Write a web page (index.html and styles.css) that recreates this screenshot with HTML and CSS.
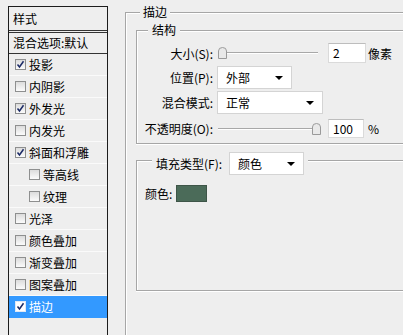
FILE: index.html
```html
<!DOCTYPE html>
<html>
<head>
<meta charset="utf-8">
<meta name="viewport" content="width=device-width, initial-scale=1.0"/>
<link rel="stylesheet" href="styles.css">
</head>
<body>
<div class="dialog">
  <!-- left list of layer styles -->
  <div class="style-list">
    <div class="list-head">样式</div>
    <div class="list-blend">混合选项:默认</div>
    <div class="item"><span class="cb"><svg width="9" height="9" viewBox="0 0 9 9"><path d="M1.5 4.5 L3.5 7 L7.5 1.2" fill="none" stroke="#1b2a66" stroke-width="1.5"/></svg></span>投影</div>
    <div class="item"><span class="cb"></span>内阴影</div>
    <div class="item"><span class="cb"><svg width="9" height="9" viewBox="0 0 9 9"><path d="M1.5 4.5 L3.5 7 L7.5 1.2" fill="none" stroke="#1b2a66" stroke-width="1.5"/></svg></span>外发光</div>
    <div class="item"><span class="cb"></span>内发光</div>
    <div class="item"><span class="cb"><svg width="9" height="9" viewBox="0 0 9 9"><path d="M1.5 4.5 L3.5 7 L7.5 1.2" fill="none" stroke="#1b2a66" stroke-width="1.5"/></svg></span>斜面和浮雕</div>
    <div class="item sub"><span class="cb"></span>等高线</div>
    <div class="item sub"><span class="cb"></span>纹理</div>
    <div class="item"><span class="cb"></span>光泽</div>
    <div class="item"><span class="cb"></span>颜色叠加</div>
    <div class="item"><span class="cb"></span>渐变叠加</div>
    <div class="item"><span class="cb"></span>图案叠加</div>
    <div class="item sel"><span class="cb"><svg width="9" height="9" viewBox="0 0 9 9"><path d="M1.5 4.5 L3.5 7 L7.5 1.2" fill="none" stroke="#1b2a66" stroke-width="1.5"/></svg></span>描边</div>
  </div>

  <!-- stroke settings -->
  <fieldset class="group outer">
    <legend class="title">描边</legend>
    <fieldset class="group struct">
      <legend class="title sub-title">结构</legend>
      <div class="row r1">
        <span class="lbl">大小(S):</span>
        <div class="slider"><span class="thumb" style="left:1px"><svg width="9" height="12" viewBox="0 0 9 12"><path d="M0.5 11.5 V4 Q0.5 0.5 4.5 0.5 Q8.5 0.5 8.5 4 V11.5 Z" fill="#e9e9e9" stroke="#9a9a9a"/></svg></span></div>
        <span class="num">2</span>
        <span class="unit">像素</span>
      </div>
      <div class="row r2">
        <span class="lbl">位置(P):</span>
        <div class="select w-pos">外部<span class="arrow"></span></div>
      </div>
      <div class="row r3">
        <span class="lbl">混合模式:</span>
        <div class="select w-mode">正常<span class="arrow"></span></div>
      </div>
      <div class="row r4">
        <span class="lbl">不透明度(O):</span>
        <div class="slider"><span class="thumb" style="left:95px"><svg width="9" height="12" viewBox="0 0 9 12"><path d="M0.5 11.5 V4 Q0.5 0.5 4.5 0.5 Q8.5 0.5 8.5 4 V11.5 Z" fill="#e9e9e9" stroke="#9a9a9a"/></svg></span></div>
        <span class="num short">100</span>
        <span class="unit pct">%</span>
      </div>
    </fieldset>

    <fieldset class="group fill">
      <legend class="fill-legend">
        <span>填充类型(F):</span>
        <span class="select w-fill">颜色<span class="arrow"></span></span>
      </legend>
      <div class="color-row">
        <span>颜色:</span>
        <span class="swatch"></span>
      </div>
    </fieldset>
  </fieldset>
</div>
</body>
</html>
```

FILE: styles.css
```css
body {
margin: 0;
background: #eeeeee;
font-family: "Noto Sans CJK SC", "Liberation Sans", sans-serif;
font-size: 12px;
color: #000;
overflow: hidden;
}
.dialog {
display: flex;
align-items: flex-start;
height: 335px;
overflow: hidden;
}
/* left list */
.style-list {
flex: none;
margin: 6px 0 0 8px;
width: 100px;
height: 329px;
box-sizing: border-box;
border: 1px solid #1c1c1c;
border-bottom: none;
background: #eeeeee;
}
.list-head {
height: 23px;
line-height: 23px;
padding-left: 4px;
border-bottom: 3px double #333;
}
.list-blend {
height: 20px;
line-height: 20px;
padding-left: 4px;
border-bottom: 1px solid #333;
}
.item {
height: 21px;
display: flex;
align-items: center;
padding-left: 6px;
border-bottom: 1px solid #fafafa;
}
.item.sub {
padding-left: 20px;
}
.item.sel {
background: #3399ff;
color: #fff;
border-bottom-color: #3399ff;
}
.cb {
flex: none;
width: 11px;
height: 11px;
box-sizing: border-box;
margin-right: 3px;
border: 1px solid #8e8f8f;
background: linear-gradient(#dcdcdc, #fbfbfb);
display: flex;
align-items: center;
justify-content: center;
}
.item.sel .cb {
background: #fff;
border-color: #dfe8f5;
}
/* group boxes */
fieldset {
margin: 0;
min-width: 0;
}
.group {
border: 1px solid #a6a6a6;
box-shadow: inset 1px 1px 0 #fff, 1px 1px 0 #fff;
}
.title {
padding: 0 3px;
margin-left: 4px;
line-height: 16px;
background: #eeeeee;
}
.outer {
flex: none;
margin: 4px 0 0 17px;
padding: 0 0 0 10px;
width: 278px;
height: 331px;
box-sizing: border-box;
border-right: none;
border-bottom: none;
box-shadow: inset 1px 1px 0 #fff;
}
.struct {
margin: 2px 0 0 0;
padding: 0 0 5px 6px;
border-right: none;
box-shadow: inset 1px 1px 0 #fff, 0 1px 0 #fff;
}
.sub-title {
margin-left: 5px;
padding: 0 4px;
}
.row {
display: flex;
align-items: center;
}
.r1 { margin-top: 5px; height: 20px; }
.r2 { margin-top: 3px; height: 23px; }
.r3 { margin-top: 2px; height: 23px; }
.r4 { margin-top: 5px; height: 19px; }
.lbl {
flex: none;
width: 70px;
margin-right: 4px;
text-align: right;
white-space: nowrap;
}
.slider {
position: relative;
flex: none;
width: 101px;
height: 14px;
margin-right: 10px;
}
.slider::before {
content: "";
position: absolute;
left: 1px;
right: 0;
top: 6px;
height: 1px;
background: #a8a8a8;
border-bottom: 1px solid #fff;
}
.thumb {
position: absolute;
top: 1px;
display: block;
height: 12px;
}
.thumb svg {
display: block;
}
.num {
box-sizing: border-box;
width: 38px;
height: 20px;
line-height: 18px;
padding-left: 4px;
background: #fff;
border: 1px solid #dadada;
border-top-color: #bdbdbd;
}
.num.short {
width: 36px;
height: 19px;
line-height: 17px;
}
.unit {
margin-left: 2px;
}
.unit.pct {
margin-left: 4px;
}
.select {
box-sizing: border-box;
display: flex;
align-items: center;
height: 23px;
padding: 0 8px;
background: #fff;
border: 1px solid #d4d4d4;
}
.arrow {
margin-left: auto;
width: 0;
height: 0;
border-left: 4px solid transparent;
border-right: 4px solid transparent;
border-top: 4px solid #000;
}
.w-pos { width: 75px; }
.w-mode { width: 106px; }
.w-fill { width: 75px; margin-left: 7px; }
/* fill box */
.fill {
margin: 1px 0 0 0;
padding: 0 0 88px 8px;
border-right: none;
box-shadow: inset 1px 1px 0 #fff, 0 1px 0 #fff;
}
.fill-legend {
display: flex;
align-items: center;
margin-left: 7px;
padding: 7px 4px 0 4px;
background: #eeeeee;
}
.color-row {
display: flex;
align-items: center;
margin-top: 10px;
height: 17px;
}
.swatch {
width: 31px;
height: 17px;
margin-left: 4px;
box-sizing: border-box;
background: #4b6b59;
border: 1px solid #3e5548;
}
```
